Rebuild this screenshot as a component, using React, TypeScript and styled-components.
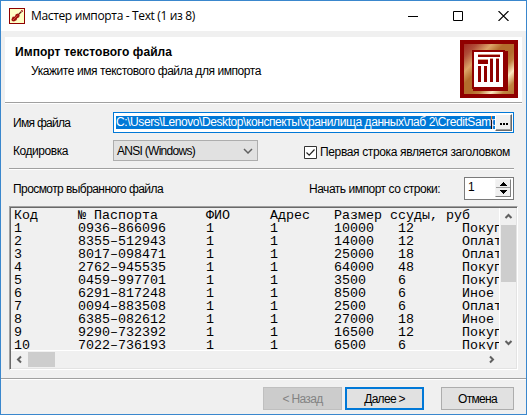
import React from 'react';
import styled, { createGlobalStyle } from 'styled-components';

const GlobalStyle = createGlobalStyle`
  *, *::before, *::after { box-sizing: border-box; }
  body { margin: 0; background: #f0f0f0; }
`;

const Window = styled.main`
  display: flex;
  flex-direction: column;
  width: 527px;
  height: 415px;
  border: 1px solid #3a87cd;
  background: #f0f0f0;
  color: #000;
  font: 12px/14px 'Liberation Sans', Arial, sans-serif;
  overflow: hidden;
`;

const TitleBar = styled.header`
  display: flex;
  align-items: center;
  height: 30px;
  padding-left: 8px;
  background: #fff;
`;

const Title = styled.h1<{ $spacing: number }>`
  flex: 1;
  margin: 0 0 0 6px;
  font: 12px/16px 'Open Sans', 'Noto Sans', sans-serif;
  letter-spacing: ${p => p.$spacing}px;
  white-space: nowrap;
`;

const Controls = styled.div`
  display: flex;
  gap: 35px;
  margin-right: 17px;
`;

const Text = styled.span<{ $spacing: number; $bold?: boolean }>`
  letter-spacing: ${p => p.$spacing}px;
  font-weight: ${p => (p.$bold ? 700 : 400)};
  white-space: nowrap;
`;

const Banner = styled.section`
  display: flex;
  justify-content: space-between;
  height: 66px;
  margin: 6px 4px 0 4px;
  padding: 3px 4px 0 10px;
  background: #fff;
  border-bottom: 1px solid #a0a0a0;
  box-shadow: 0 1px #fff;
`;

const BannerText = styled.div`
  display: flex;
  flex-direction: column;
  gap: 5px;
  padding-top: 5px;
`;

const Indent = styled.div`
  padding-left: 16px;
`;

const Form = styled.section`
  display: grid;
  grid-template-columns: 100px minmax(0, 1fr);
  row-gap: 7px;
  margin: 9px 12px 0 8px;
  padding: 0 0 7px 4px;
  border-bottom: 1px solid #a0a0a0;
  box-shadow: 0 1px #fff;
`;

const Label = styled.label<{ $drop: number }>`
  padding-top: ${p => p.$drop}px;
`;

const PathField = styled.div`
  display: flex;
  height: 21px;
  padding: 1px 1px 1px 2px;
  border: 1px solid #0078d7;
  background: #fff;
`;

const Selection = styled.div`
  position: relative;
  flex: 1;
  min-width: 0;
  height: 13px;
  margin-top: 2px;
  line-height: 13px;
  overflow: hidden;
  background: #0078d7;
  color: #fff;
`;

const Caret = styled.i`
  position: absolute;
  top: 0;
  right: 3px;
  width: 1px;
  height: 13px;
  background: linear-gradient(#ff8728 30%, #111 30%);
`;

const BrowseButton = styled.button`
  display: flex;
  align-items: center;
  justify-content: center;
  gap: 1px;
  width: 17px;
  height: 17px;
  padding: 2px 0 0;
  border: 1px solid;
  border-color: #fff #696969 #696969 #fff;
  box-shadow: inset -1px -1px #a0a0a0;
  background: #f0f0f0;
`;

const Dot = styled.i`
  width: 2px;
  height: 2px;
  background: #000;
`;

const OptionRow = styled.div`
  display: flex;
  justify-content: space-between;
`;

const Select = styled.div`
  display: flex;
  align-items: center;
  justify-content: space-between;
  width: 145px;
  height: 21px;
  padding: 0 3px;
  border: 1px solid #adadad;
  background: #e1e1e1;
`;

const CheckLabel = styled.label`
  display: flex;
  align-items: center;
  gap: 3px;
  height: 14px;
  margin: 5px 4px 0 0;
`;

const PreviewBar = styled.div`
  display: flex;
  align-items: center;
  height: 23px;
  margin: 8px 12px 0 12px;
`;

const Grow = styled.div`
  flex: 1;
  padding-top: 1px;
`;

const Spinner = styled.div`
  display: flex;
  justify-content: space-between;
  width: 50px;
  height: 23px;
  margin-left: 24px;
  padding: 1px 2px 2px 3px;
  border: 1px solid #7a7a7a;
  background: #fff;
  line-height: 16px;
`;

const SpinButtons = styled.div`
  display: flex;
  flex-direction: column;
  width: 16px;
  height: 18px;
  border: 1px solid;
  border-color: #f4f4f4 #808080 #808080 #f4f4f4;
  background: #f0f0f0;
`;

const Memo = styled.section`
  display: grid;
  grid-template-columns: 489px 16px;
  grid-template-rows: 143px 17px;
  height: 164px;
  width: 509px;
  margin: 6px 0 0 8px;
  border: 1px solid;
  border-color: #a0a0a0 #fff #fff #a0a0a0;
  box-shadow: inset 1px 1px #696969, inset -1px -1px #e3e3e3;
  padding: 1px;
`;

const Lines = styled.pre`
  margin: 0;
  padding: 1px 0 0 3px;
  overflow: hidden;
  border-right: 1px solid #fff;
  border-bottom: 1px solid #fff;
  font: 13.333px/13px 'Liberation Mono', 'Courier New', monospace;
`;

const VerticalBar = styled.div`
  display: flex;
  flex-direction: column;
  align-items: center;
  justify-content: space-between;
  height: 143px;
  padding: 4px 0;
`;

const HorizontalBar = styled.div`
  display: flex;
  align-items: center;
  justify-content: space-between;
  padding: 0 4px;
`;

const Thumb = styled.div<{ $w: number; $h: number }>`
  width: ${p => p.$w}px;
  height: ${p => p.$h}px;
  background: #cdcdcd;
`;

const ThumbGroup = styled.div<{ $column?: boolean }>`
  display: flex;
  flex-direction: ${p => (p.$column ? 'column' : 'row')};
  align-items: center;
  gap: 4px;
`;

const Footer = styled.footer`
  display: flex;
  justify-content: flex-end;
  height: 35px;
  margin-top: 8px;
  padding: 8px 12px 0 0;
  border-top: 1px solid #a0a0a0;
  box-shadow: inset 0 1px #fff;
`;

const Button = styled.button<{ $kind: 'disabled' | 'primary' | 'plain' }>`
  width: ${p => (p.$kind === 'plain' ? 73 : 79)}px;
  height: 23px;
  margin-left: ${p => (p.$kind === 'plain' ? 17 : 3)}px;
  padding: 1px 0 0;
  border: ${p => (p.$kind === 'primary' ? '2px solid #0078d7' : p.$kind === 'disabled' ? '1px solid #bfbfbf' : '1px solid #adadad')};
  background: ${p => (p.$kind === 'disabled' ? '#cccccc' : '#e1e1e1')};
  color: ${p => (p.$kind === 'disabled' ? '#838383' : '#000')};
  font: inherit;
`;

const Violin = () => (
  <svg width="16" height="16" viewBox="0 0 16 16">
    <rect x=".5" y=".5" width="15" height="15" fill="#ffffc6" stroke="#900000" />
    <path d="M8.500 7.500 12.500 3.500" stroke="#6a1717" strokeWidth="1.2" />
    <path d="M12 2.500h1.500V4" fill="none" stroke="#c04040" />
    <path d="M2.400 11.500 3.600 8.800l2.400-.4.600-2 1.900-.8 2.200 1.600-.6 2.100-1.900.9-.7 2-2.500 1.200-2.100-.4Z" fill="#a01410" />
    <path d="m4 12 4.500-4.500" stroke="#d86040" strokeWidth=".8" />
  </svg>
);

const Logo = () => (
  <svg width="58" height="58" viewBox="0 0 58 58" shapeRendering="crispEdges">
    <defs>
      <linearGradient id="metal" x1="0" y1="0" x2="1" y2="1">
        <stop offset="0" stopColor="#a02820" />
        <stop offset=".13" stopColor="#b04c38" />
        <stop offset=".28" stopColor="#dca468" />
        <stop offset=".4" stopColor="#b46c2c" />
        <stop offset=".56" stopColor="#b46c2c" />
        <stop offset=".64" stopColor="#c08040" />
        <stop offset=".76" stopColor="#fce8c0" />
        <stop offset=".88" stopColor="#c08440" />
        <stop offset="1" stopColor="#b87434" />
      </linearGradient>
    </defs>
    <path fill="#900000" d="M0 0h58v58H0z" />
    <path fill="url(#metal)" d="M4 4h50v50H4z" />
    <path fill="#900000" d="M12 10h33v1h3v40H13v-2h-1z" />
    <path fill="#fff" d="M14 12h29v35H14z" />
    <path fill="#dc9c84" d="M18 14h22v1H18zM18 19h10v1H18zM30 18h3v1h-3zM36 18h3v1h-3z" />
    <path fill="#900000" d="M18 15h22v2H18zM18 20h10v4H18zM18 26h3v16h-3zM24 26h3v16h-3zM30 19h3v23h-3zM36 19h3v23h-3z" />
  </svg>
);

const chevrons = { up: 'M1.500 6 4.500 3 7.500 6', down: 'M1.500 3 4.500 6 7.500 3', left: 'M6 1.500 3 4.500 6 7.500', right: 'M3 1.500 6 4.500 3 7.500' };

const Chevron = ({ dir, thin }: { dir: keyof typeof chevrons; thin?: boolean }) => (
  <svg width={thin ? 12 : 9} height={thin ? 12 : 9} viewBox="0 0 9 9">
    <path d={chevrons[dir]} fill="none" stroke="#606060" strokeWidth={thin ? 1.1 : 2} />
  </svg>
);

const rows = [
  ['Код', '№ Паспорта', 'ФИО', 'Адрес', 'Размер ссуды, руб'],
  ['1', '0936–866096', '1', '1', '10000', '12', 'Покуп'],
  ['2', '8355–512943', '1', '1', '14000', '12', 'Оплат'],
  ['3', '8017–098471', '1', '1', '25000', '18', 'Оплат'],
  ['4', '2762–945535', '1', '1', '64000', '48', 'Покуп'],
  ['5', '0459–997701', '1', '1', '3500', '6', 'Покуп'],
  ['6', '6291–817248', '1', '1', '8500', '6', 'Иное'],
  ['7', '0094–883508', '1', '1', '2500', '6', 'Оплат'],
  ['8', '6385–082612', '1', '1', '27000', '18', 'Иное'],
  ['9', '9290–732392', '1', '1', '16500', '12', 'Покуп'],
  ['10', '7022–736193', '1', '1', '6500', '6', 'Покуп'],
];

const preview = rows
  .map(cells => cells.map((cell, i) => cell.padEnd(i === 1 ? 16 : 8)).join('').trimEnd())
  .join('\n');

export default function App() {
  return (
    <>
      <GlobalStyle />
      <Window>
        <TitleBar>
          <Violin />
          <Title $spacing={-0.346}>Мастер импорта - Text (1 из 8)</Title>
          <Controls>
            <svg width="10" height="10"><path d="M0 5.500h10" stroke="#000" /></svg>
            <svg width="10" height="10"><path d="M.5.500h9v9h-9z" fill="none" stroke="#000" /></svg>
            <svg width="11" height="10"><path d="m.5 0 10 10M10.500 0l-10 10" stroke="#000" strokeWidth="1.1" /></svg>
          </Controls>
        </TitleBar>

        <Banner>
          <BannerText>
            <Text $bold $spacing={0.066}>Импорт текстового файла</Text>
            <Indent>
              <Text $spacing={-0.433}>Укажите имя текстового файла для импорта</Text>
            </Indent>
          </BannerText>
          <Logo />
        </Banner>

        <Form>
          <Label $drop={4}><Text $spacing={-0.7}>Имя файла</Text></Label>
          <PathField>
            <Selection>
              <Text $spacing={-0.42}>C:\Users\Lenovo\Desktop\конспекты\хранилища данных\лаб 2\CreditSamp</Text>
              <Caret />
            </Selection>
            <BrowseButton><Dot /><Dot /><Dot /></BrowseButton>
          </PathField>
          <Label $drop={4}><Text $spacing={-0.446}>Кодировка</Text></Label>
          <OptionRow>
            <Select>
              <Text $spacing={-0.715}>ANSI (Windows)</Text>
              <Chevron dir="down" thin />
            </Select>
            <CheckLabel>
              <svg width="13" height="13">
                <path d="M.5.500h12v12H.5z" fill="#fff" stroke="#333" />
                <path d="m2.500 6.500 2.700 2.700 5.300-5.700" fill="none" stroke="#222" strokeWidth="1.2" />
              </svg>
              <Text $spacing={-0.359}>Первая строка является заголовком</Text>
            </CheckLabel>
          </OptionRow>
        </Form>

        <PreviewBar>
          <Grow><Text $spacing={-0.573}>Просмотр выбранного файла</Text></Grow>
          <Text $spacing={-0.477}>Начать импорт со строки:</Text>
          <Spinner>
            <Text $spacing={0}>1</Text>
            <SpinButtons>
              <svg width="14" height="16" shapeRendering="crispEdges">
                <path d="M0 7.500h14" stroke="#a0a0a0" />
                <path d="M7 2h1v1h1v1h1v1h1v1H4V5h1V4h1V3h1zM4 10h7v1h-1v1H9v1H8v1H7v-1H6v-1H5v-1H4z" />
              </svg>
            </SpinButtons>
          </Spinner>
        </PreviewBar>

        <Memo>
          <Lines>{preview}</Lines>
          <VerticalBar>
            <ThumbGroup $column>
              <Chevron dir="up" />
              <Thumb $w={15} $h={57} />
            </ThumbGroup>
            <Chevron dir="down" />
          </VerticalBar>
          <HorizontalBar>
            <ThumbGroup>
              <Chevron dir="left" />
              <Thumb $w={27} $h={15} />
            </ThumbGroup>
            <Chevron dir="right" />
          </HorizontalBar>
        </Memo>

        <Footer>
          <Button $kind="disabled" disabled><Text $spacing={-0.675}>&lt; Назад</Text></Button>
          <Button $kind="primary"><Text $spacing={-0.7}>Далее &gt;</Text></Button>
          <Button $kind="plain"><Text $spacing={-0.676}>Отмена</Text></Button>
        </Footer>
      </Window>
    </>
  );
}
